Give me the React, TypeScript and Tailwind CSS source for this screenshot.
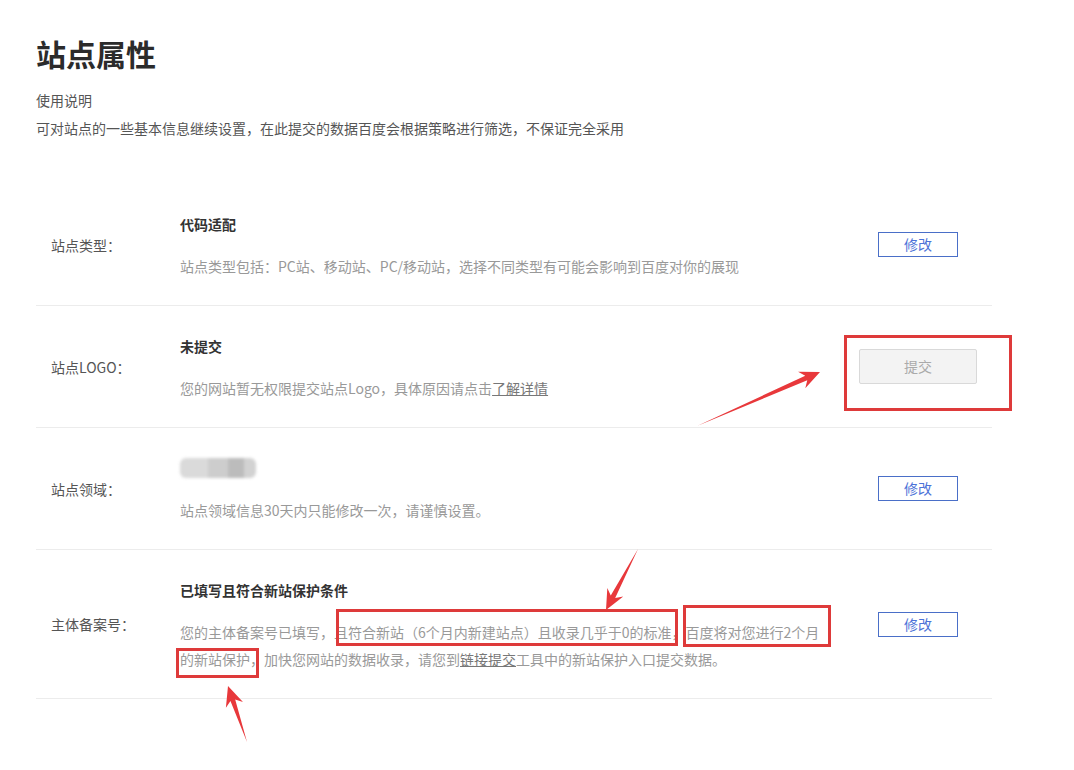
import React from "react";

function arrowPoints(tx: number, ty: number, px: number, py: number, headL = 20, headW = 18, neckW = 5) {
  const dx = px - tx;
  const dy = py - ty;
  const len = Math.hypot(dx, dy);
  const ux = dx / len;
  const uy = dy / len;
  const nx = -uy;
  const ny = ux;
  const bx = px - ux * headL;
  const by = py - uy * headL;
  const nkx = bx + ux * 5;
  const nky = by + uy * 5;
  const pts = [
    [tx, ty],
    [nkx + (nx * neckW) / 2, nky + (ny * neckW) / 2],
    [bx + (nx * headW) / 2, by + (ny * headW) / 2],
    [px, py],
    [bx - (nx * headW) / 2, by - (ny * headW) / 2],
    [nkx - (nx * neckW) / 2, nky - (ny * neckW) / 2],
  ];
  return pts.map((p) => p.join(",")).join(" ");
}

function EditButton() {
  return (
    <button className="w-[80px] h-[25px] border border-[#4a6fc8] text-[#4d73d8] text-[14px] leading-[23px] bg-white">
      修改
    </button>
  );
}

function Row({
  label,
  title,
  children,
  action,
}: {
  label: string;
  title: React.ReactNode;
  children: React.ReactNode;
  action: React.ReactNode;
}) {
  return (
    <div className="flex items-center border-b border-[#ececec]">
      <div className="w-[144px] pl-[15px] text-[14px] text-[#555] leading-[20px]">{label}</div>
      <div className="flex-1 pt-[30px] pb-[25px]">
        <div className="h-[20px] leading-[20px] text-[14px] font-bold text-[#333]">{title}</div>
        <div className="mt-[19px] text-[14px] leading-[27px] text-[#999] whitespace-nowrap">{children}</div>
      </div>
      <div className="w-[148px] flex justify-center">{action}</div>
    </div>
  );
}

export default function App() {
  return (
    <div className="relative w-[1074px] h-[770px] bg-white overflow-hidden font-['Noto_Sans_CJK_SC',sans-serif]">
      <div className="ml-[36px] w-[956px] pt-[33px]">
        <h1 className="text-[30px] leading-[40px] font-bold text-[#2b2b2b]">站点属性</h1>
        <div className="mt-[13px] text-[14px] leading-[28px] text-[#555]">使用说明</div>
        <div className="text-[14px] leading-[28px] text-[#555]">
          可对站点的一些基本信息继续设置，在此提交的数据百度会根据策略进行筛选，不保证完全采用
        </div>

        <div className="mt-[42px]">
          <Row label="站点类型：" title="代码适配" action={<EditButton />}>
            站点类型包括：PC站、移动站、PC/移动站，选择不同类型有可能会影响到百度对你的展现
          </Row>
          <Row
            label="站点LOGO："
            title="未提交"
            action={
              <button className="w-[118px] h-[35px] border border-[#d9d9d9] rounded-[2px] bg-[#f3f3f3] text-[#aaa] text-[14px]">
                提交
              </button>
            }
          >
            您的网站暂无权限提交站点Logo，具体原因请点击<span className="underline text-[#777]">了解详情</span>
          </Row>
          <Row
            label="站点领域："
            title={
              <div className="w-[76px] h-[20px] rounded-[6px] overflow-hidden flex blur-[1.5px]">
                <div className="w-[28px] bg-[#dadada]" />
                <div className="w-[20px] bg-[#cdcdcd]" />
                <div className="w-[16px] bg-[#bcbcbc]" />
                <div className="w-[12px] bg-[#d2d2d2]" />
              </div>
            }
            action={<EditButton />}
          >
            站点领域信息30天内只能修改一次，请谨慎设置。
          </Row>
          <Row label="主体备案号：" title="已填写且符合新站保护条件" action={<EditButton />}>
            您的主体备案号已填写，且符合新站（6个月内新建站点）且收录几乎于0的标准，百度将对您进行2个月
            <br />
            的新站保护，加快您网站的数据收录，请您到<span className="underline text-[#777]">链接提交</span>工具中的新站保护入口提交数据。
          </Row>
        </div>
      </div>

      {/* annotation boxes */}
      <div className="absolute left-[844px] top-[335px] w-[168px] h-[76px] border-[3px] border-[#de3a3a]" />
      <div className="absolute left-[336px] top-[609px] w-[342px] h-[37px] border-[3px] border-[#de3a3a]" />
      <div className="absolute left-[683px] top-[605px] w-[148px] h-[42px] border-[3px] border-[#de3a3a]" />
      <div className="absolute left-[176px] top-[648px] w-[83px] h-[30px] border-[3px] border-[#de3a3a]" />

      {/* arrows */}
      <svg className="absolute left-0 top-0 pointer-events-none" width="1074" height="770">
        <polygon points={arrowPoints(697, 426, 820, 372)} fill="#e8383b" />
        <polygon points={arrowPoints(638, 549, 606, 610)} fill="#e8383b" />
        <polygon points={arrowPoints(247, 742, 228, 686)} fill="#e8383b" />
      </svg>
    </div>
  );
}
